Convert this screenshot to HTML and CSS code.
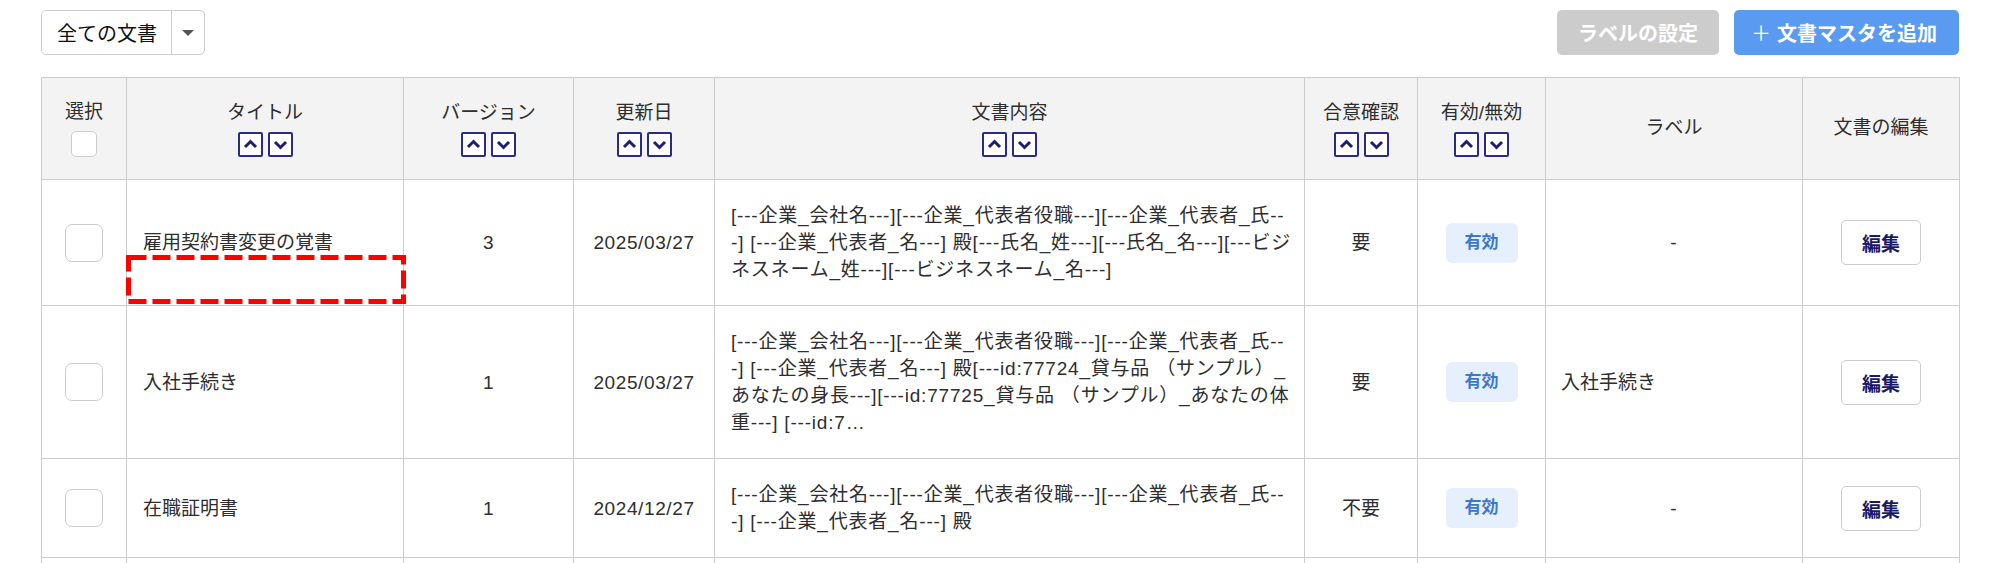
FILE: index.html
```html
<!DOCTYPE html>
<html lang="ja">
<head>
<meta charset="utf-8">
<title>文書マスタ</title>
<link rel="stylesheet" href="styles.css">
</head>
<body>
<div class="page">
  <div class="toolbar">
    <div class="select">
      <span class="select-text">全ての文書</span>
      <span class="select-arrow"><span class="tri"></span></span>
    </div>
    <div class="actions">
      <button class="btn btn-gray">ラベルの設定</button>
      <button class="btn btn-blue"><span class="plus">＋</span>文書マスタを追加</button>
    </div>
  </div>

  <table class="grid">
    <colgroup>
      <col style="width:85px"><col style="width:277px"><col style="width:170px"><col style="width:141px"><col style="width:590px"><col style="width:113px"><col style="width:128px"><col style="width:257px"><col style="width:157px">
    </colgroup>
    <thead>
      <tr>
        <th><div class="hl">選択</div><span class="cb cb-sm"></span></th>
        <th><div class="hl">タイトル</div><div class="sorts"><span class="sb"><svg viewBox="0 0 21 21"><polyline points="5,13 10.5,7.5 16,13"/></svg></span><span class="sb"><svg viewBox="0 0 21 21"><polyline points="5,8 10.5,13.5 16,8"/></svg></span></div></th>
        <th><div class="hl">バージョン</div><div class="sorts"><span class="sb"><svg viewBox="0 0 21 21"><polyline points="5,13 10.5,7.5 16,13"/></svg></span><span class="sb"><svg viewBox="0 0 21 21"><polyline points="5,8 10.5,13.5 16,8"/></svg></span></div></th>
        <th><div class="hl">更新日</div><div class="sorts"><span class="sb"><svg viewBox="0 0 21 21"><polyline points="5,13 10.5,7.5 16,13"/></svg></span><span class="sb"><svg viewBox="0 0 21 21"><polyline points="5,8 10.5,13.5 16,8"/></svg></span></div></th>
        <th><div class="hl">文書内容</div><div class="sorts"><span class="sb"><svg viewBox="0 0 21 21"><polyline points="5,13 10.5,7.5 16,13"/></svg></span><span class="sb"><svg viewBox="0 0 21 21"><polyline points="5,8 10.5,13.5 16,8"/></svg></span></div></th>
        <th><div class="hl">合意確認</div><div class="sorts"><span class="sb"><svg viewBox="0 0 21 21"><polyline points="5,13 10.5,7.5 16,13"/></svg></span><span class="sb"><svg viewBox="0 0 21 21"><polyline points="5,8 10.5,13.5 16,8"/></svg></span></div></th>
        <th><div class="hl">有効/無効</div><div class="sorts"><span class="sb"><svg viewBox="0 0 21 21"><polyline points="5,13 10.5,7.5 16,13"/></svg></span><span class="sb"><svg viewBox="0 0 21 21"><polyline points="5,8 10.5,13.5 16,8"/></svg></span></div></th>
        <th><div class="hl">ラベル</div></th>
        <th><div class="hl">文書の編集</div></th>
      </tr>
    </thead>
    <tbody>
      <tr>
        <td class="c"><span class="cb"></span></td>
        <td class="title">雇用契約書変更の覚書</td>
        <td class="c num">3</td>
        <td class="c num">2025/03/27</td>
        <td class="content">[---企業_会社名---][---企業_代表者役職---][---企業_代表者_氏--<br>-] [---企業_代表者_名---] 殿[---氏名_姓---][---氏名_名---][---ビジ<br>ネスネーム_姓---][---ビジネスネーム_名---]</td>
        <td class="c">要</td>
        <td class="c"><span class="badge">有効</span></td>
        <td class="label"><span class="dash">-</span></td>
        <td class="c"><button class="edit">編集</button></td>
      </tr>
      <tr>
        <td class="c"><span class="cb"></span></td>
        <td class="title">入社手続き</td>
        <td class="c num">1</td>
        <td class="c num">2025/03/27</td>
        <td class="content">[---企業_会社名---][---企業_代表者役職---][---企業_代表者_氏--<br>-] [---企業_代表者_名---] 殿[---id:77724_貸与品 （サンプル）_<br>あなたの身長---][---id:77725_貸与品 （サンプル）_あなたの体<br>重---] [---id:7…</td>
        <td class="c">要</td>
        <td class="c"><span class="badge">有効</span></td>
        <td class="label">入社手続き</td>
        <td class="c"><button class="edit">編集</button></td>
      </tr>
      <tr>
        <td class="c"><span class="cb"></span></td>
        <td class="title">在職証明書</td>
        <td class="c num">1</td>
        <td class="c num">2024/12/27</td>
        <td class="content">[---企業_会社名---][---企業_代表者役職---][---企業_代表者_氏--<br>-] [---企業_代表者_名---] 殿</td>
        <td class="c">不要</td>
        <td class="c"><span class="badge">有効</span></td>
        <td class="label"><span class="dash">-</span></td>
        <td class="c"><button class="edit">編集</button></td>
      </tr>
      <tr class="filler">
        <td class="c"><span class="cb"></span></td>
        <td class="title"></td>
        <td class="c"></td>
        <td class="c"></td>
        <td class="content"></td>
        <td class="c"></td>
        <td class="c"></td>
        <td class="label"></td>
        <td class="c"></td>
      </tr>
    </tbody>
  </table>

  <svg class="mark" width="280" height="49" viewBox="0 0 280 49"><rect x="2.5" y="2.5" width="275" height="44" fill="none" stroke="#ff0000" stroke-width="5" stroke-dasharray="18 6"/></svg>
</div>
</body>
</html>
```

FILE: styles.css
```css
html, body {
  margin: 0;
  padding: 0;
  overflow: hidden;
  background: #ffffff;
}
body {
  font-family: "Liberation Sans", "Noto Sans CJK JP", sans-serif;
  font-size: 19px;
  color: #2e2e2e;
}
.page {
  position: relative;
  padding: 10px 41px 0 41px;
}
.toolbar {
  display: flex;
  justify-content: space-between;
  align-items: flex-start;
  height: 45px;
  margin-bottom: 22px;
}
.select {
  display: flex;
  height: 45px;
  box-sizing: border-box;
  border: 1px solid #cccccc;
  border-radius: 5px;
  background: #fff;
}
.select-text {
  display: flex;
  align-items: center;
  padding: 0 14px 0 15px;
  color: #111111;
  font-size: 20px;
  border-right: 1px solid #cccccc;
}
.select-arrow {
  width: 32px;
  display: flex;
  align-items: center;
  justify-content: center;
}
.tri {
  width: 0;
  height: 0;
  border-left: 6px solid transparent;
  border-right: 6px solid transparent;
  border-top: 6px solid #555555;
}
.actions {
  display: flex;
  gap: 15px;
}
.btn {
  height: 45px;
  border: none;
  border-radius: 5px;
  font-family: "Liberation Sans", "Noto Sans CJK JP", sans-serif;
  font-size: 20px;
  font-weight: bold;
  color: #ffffff;
  padding: 0 21px;
  display: flex;
  align-items: center;
}
.btn-gray {
  background: #cccccc;
}
.btn-blue {
  background: #5a9af0;
  padding: 0 22px 0 17px;
}
.plus {
  font-weight: normal;
  margin-right: 6px;
}
.grid {
  width: 1918px;
  table-layout: fixed;
  border-collapse: collapse;
}
.grid th, .grid td {
  border: 1px solid #cccccc;
  line-height: 27px;
}
.grid th {
  background: #f3f3f3;
  font-weight: normal;
  padding: 20px 4px 22px;
  vertical-align: middle;
  text-align: center;
  color: #2e2e2e;
}
.hl {
  white-space: nowrap;
}
.sorts {
  display: flex;
  justify-content: center;
  gap: 5px;
  margin-top: 6px;
}
.sb {
  width: 25px;
  height: 25px;
  box-sizing: border-box;
  border: 2px solid #2b2b85;
  border-radius: 2px;
  background: #ffffff;
  display: block;
}
.sb svg {
  display: block;
  width: 21px;
  height: 21px;
  fill: none;
  stroke: #1e1e78;
  stroke-width: 3;
}
.cb {
  display: inline-block;
  width: 38px;
  height: 38px;
  box-sizing: border-box;
  border: 1px solid #cccccc;
  border-radius: 7px;
  background: #ffffff;
  vertical-align: middle;
}
.cb-sm {
  width: 26px;
  height: 26px;
  border-radius: 5px;
  margin-top: 6px;
}
.grid td {
  padding: 22px 16px;
  vertical-align: middle;
  color: #2e2e2e;
}
.grid td.c {
  text-align: center;
  padding: 22px 8px;
}
.grid td.num {
  letter-spacing: 0.6px;
}
.grid td.title {
  text-align: left;
}
.grid td.content {
  text-align: left;
  white-space: nowrap;
  letter-spacing: 0.8px;
}
.grid td.label {
  text-align: left;
  padding-left: 15px;
}
.dash {
  display: block;
  text-align: center;
}
.badge {
  display: inline-block;
  height: 40px;
  line-height: 40px;
  padding: 0 19px;
  border-radius: 6px;
  background: #e6f0fd;
  color: #3a78ca;
  font-size: 17px;
  font-weight: bold;
  vertical-align: middle;
}
.edit {
  height: 45px;
  padding: 0 20px;
  box-sizing: border-box;
  border: 1px solid #cccccc;
  border-radius: 5px;
  background: #ffffff;
  color: #1a1a6a;
  font-family: "Liberation Sans", "Noto Sans CJK JP", sans-serif;
  font-size: 19px;
  font-weight: bold;
  vertical-align: middle;
}
.filler td {
  height: 80px;
}
.mark {
  position: absolute;
  left: 126px;
  top: 255px;
}
```
